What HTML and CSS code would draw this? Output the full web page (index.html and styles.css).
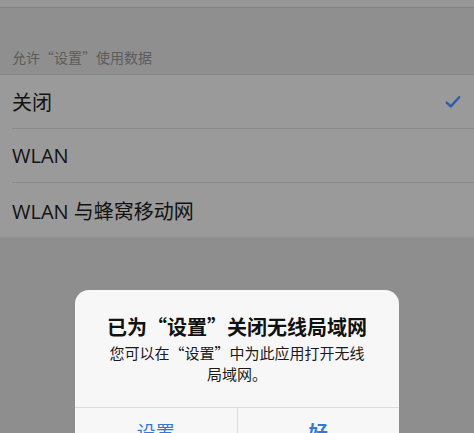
FILE: index.html
```html
<!DOCTYPE html>
<html lang="zh-CN">
<head>
<meta charset="utf-8">
<link rel="stylesheet" href="styles.css">
</head>
<body>
<div class="page">
  <div class="top-strip"></div>
  <div class="section-header">允许“设置”使用数据</div>
  <div class="list">
    <div class="row">
      <span class="label">关闭</span>
      <svg class="check" width="16" height="14" viewBox="0 0 16 14"><path d="M1.8 7.6 L5.8 11.4 L14.2 2.2" fill="none" stroke="#2e5ea8" stroke-width="2.4" stroke-linecap="round" stroke-linejoin="round"/></svg>
    </div>
    <div class="row"><span class="label">WLAN</span></div>
    <div class="row last"><span class="label">WLAN 与蜂窝移动网</span></div>
  </div>
</div>
<div class="alert">
  <div class="alert-body">
    <div class="alert-title">已为“设置”关闭无线局域网</div>
    <div class="alert-msg">您可以在“设置”中为此应用打开无线<br>局域网。</div>
  </div>
  <div class="alert-buttons">
    <div class="btn">设置</div>
    <div class="btn strong">好</div>
  </div>
</div>
</body>
</html>
```
FILE: styles.css
```css
html, body {
  margin: 0;
  padding: 0;
  width: 474px;
  height: 433px;
  overflow: hidden;
  background: #8e8e8e;
  font-family: "Noto Sans CJK SC", "Noto Sans", sans-serif;
}
.page {
  display: flex;
  flex-direction: column;
}
.top-strip {
  height: 7px;
  background: #989898;
  border-bottom: 1px solid #848484;
}
.section-header {
  height: 67px;
  box-sizing: border-box;
  padding: 0 12px 7px;
  display: flex;
  align-items: flex-end;
  font-size: 14px;
  line-height: 20px;
  color: #5c5c5c;
  background: #8f8f8f;
  border-bottom: 1px solid #868686;
}
.list {
  background: #9a9a9a;
  padding-left: 12px;
}
.row {
  height: 54px;
  box-sizing: border-box;
  display: flex;
  align-items: center;
  justify-content: space-between;
  padding-right: 13px;
  border-bottom: 1px solid #8a8a8a;
}
.row.last {
  border-bottom: none;
}
.label {
  font-family: "Open Sans", "Noto Sans CJK SC", sans-serif;
  font-size: 20px;
  color: #121212;
}
.check {
  display: block;
}
.alert {
  position: absolute;
  left: 75px;
  top: 290px;
  width: 324px;
  background: #f7f7f7;
  border-radius: 14px;
  overflow: hidden;
}
.alert-body {
  padding: 25px 12px 23px;
  text-align: center;
}
.alert-title {
  font-size: 20px;
  line-height: 24px;
  font-weight: bold;
  color: #111;
}
.alert-msg {
  margin-top: 3px;
  font-size: 15px;
  line-height: 21px;
  color: #1a1a1a;
}
.alert-buttons {
  display: flex;
  border-top: 1px solid #dcdcdc;
  height: 46px;
}
.btn {
  flex: 1;
  display: flex;
  align-items: center;
  justify-content: center;
  font-size: 19px;
  color: #3577d4;
}
.btn + .btn {
  border-left: 1px solid #dcdcdc;
}
.btn.strong {
  font-weight: bold;
}
```
